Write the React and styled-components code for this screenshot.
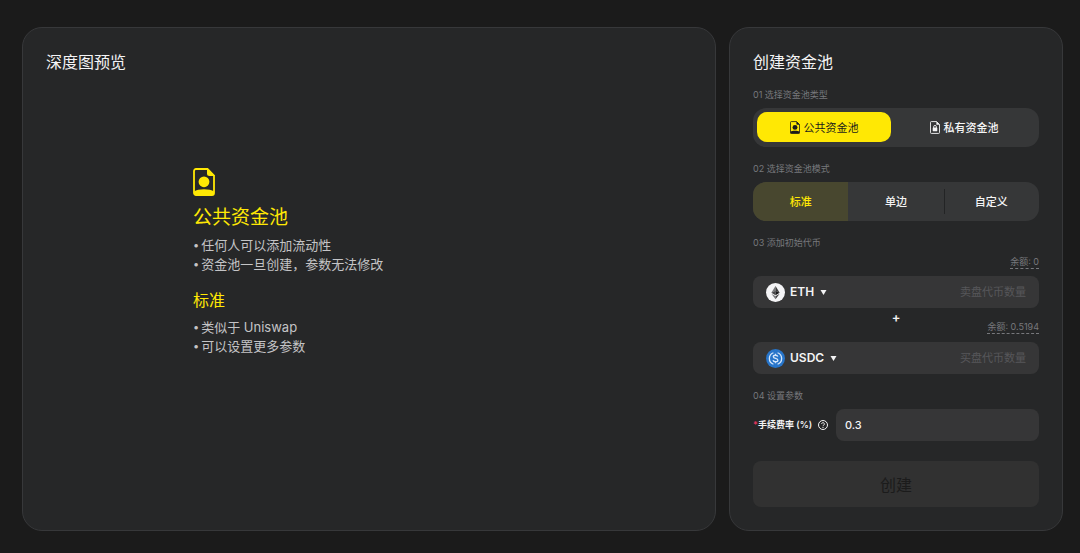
import React, { useState } from "react";
import styled, { createGlobalStyle, css } from "styled-components";

const GlobalStyle = createGlobalStyle`
  * { box-sizing: border-box; }
  body {
    margin: 0;
    background: #1b1b1b;
    color: #f4f4f5;
    font-family: Inter, "Noto Sans CJK SC", sans-serif;
    font-size: 11px;
  }
  h1, h2, h3, p, ul { margin: 0; padding: 0; font-weight: 400; }
  button, input, select { font: inherit; color: inherit; border: 0; margin: 0; }
`;

const Page = styled.main`
  display: grid;
  grid-template-columns: minmax(0, 1fr) 334px;
  gap: 13px;
  padding: 27px 17px 22px 22px;

  @media (max-width: 720px) {
    grid-template-columns: 1fr;
  }
`;

const Panel = styled.section`
  padding: 22px 23px 23px;
  border: 1px solid #37383a;
  border-radius: 20px;
  background: #262728;
`;

const PanelTitle = styled.h1`
  font-size: 16px;
  line-height: 24px;
`;

const Intro = styled.div`
  max-width: 352px;
  margin: 94px auto 0;
  color: #ffe804;

  > svg { display: block; }
`;

const IntroTitle = styled.h2`
  margin: 8px 0 4px;
  font-size: 19px;
  line-height: 28px;
`;

const IntroSubtitle = styled.h3`
  margin: 14px 0 6px;
  font-size: 16px;
  line-height: 24px;
`;

const Points = styled.ul`
  list-style: none;
  color: #c4c4c6;
  font-size: 13px;
  line-height: 19px;

  li { display: flex; gap: 2px; }
  li::before { content: "•"; font-size: 11px; }
`;

const StepLabel = styled.h2`
  margin: 15px 0 6px;
  color: #77787c;
  font-size: 9px;
  line-height: 14px;

  &:first-of-type { margin-top: 14px; }
`;

const Segments = styled.div`
  display: flex;
  height: 39px;
  border-radius: 13px;
  background: #363738;
  overflow: hidden;
`;

const TypeSegments = styled(Segments)`
  gap: 6px;
  padding: 4px 8px 5px 4px;
`;

const segmentButton = css`
  display: flex;
  flex: 1;
  align-items: center;
  justify-content: center;
  gap: 4px;
  padding: 0 0 2px;
  background: transparent;
  font-weight: 500;
  cursor: pointer;
`;

const TypeButton = styled.button`
  ${segmentButton}
  padding-bottom: 0;
  border-radius: 10px;
  ${(p) => p.$active && css`
    background: #ffe804;
    color: #1b1b1b;
    font-weight: 400;
  `}
`;

const ModeButton = styled.button`
  ${segmentButton}
  position: relative;
  ${(p) => p.$active && css`
    background: #48472f;
    color: #ffe804;
  `}

  & + &::before {
    content: "";
    position: absolute;
    left: 0;
    top: 7px;
    bottom: 7px;
    width: 1px;
    background: #232425;
  }
`;

const BalanceRow = styled.div`
  display: grid;
  grid-template-columns: 1fr auto 1fr;
  align-items: end;
  height: ${(p) => (p.$joined ? 34 : 20)}px;
  padding-bottom: 8px;
`;

const Plus = styled.span`
  grid-column: 2;
  align-self: start;
  font-size: 13px;
  font-weight: 600;
  line-height: 18px;
`;

const Balance = styled.span`
  grid-column: 3;
  justify-self: end;
  border-bottom: 1px dashed #77787c;
  color: #77787c;
  font-size: 9px;
  line-height: 12px;
`;

const TokenField = styled.div`
  display: flex;
  align-items: center;
  height: 32px;
  padding: 0 13px;
  border-radius: 8px;
  background: #363637;

  > svg { flex: none; }
`;

const TokenSelect = styled.select`
  appearance: none;
  field-sizing: content;
  margin: 0 6px 0 5px;
  padding: 0;
  background: transparent;
  font-size: 12px;
  font-weight: 600;
  line-height: 18px;
`;

const AmountInput = styled.input`
  flex: 1;
  min-width: 0;
  padding: 0;
  background: transparent;
  text-align: right;
  outline: none;

  &::placeholder { color: #57575a; opacity: 1; }
`;

const FeeRow = styled.div`
  display: flex;
  align-items: center;
`;

const FeeLabel = styled.label`
  display: flex;
  align-items: center;
  width: 83px;
  font-size: 9px;
  font-weight: 600;
  line-height: 14px;
  white-space: nowrap;

  svg { margin-left: 6px; }
`;

const Required = styled.span`
  width: 5px;
  color: #e0355f;
`;

const FeeInput = styled.input`
  flex: 1;
  min-width: 0;
  height: 32px;
  padding: 0 9px;
  border-radius: 8px;
  background: #363637;
  font-weight: 500;
  outline: none;
`;

const SubmitButton = styled.button`
  width: 100%;
  height: 46px;
  margin-top: 20px;
  border-radius: 8px;
  background: #313131;
  color: #1b1b1b;
  font-size: 16px;
`;

function PublicIcon({ width, height }) {
  return (
    <svg width={width} height={height} viewBox="0 0 22 28" fill="none" aria-hidden="true">
      <path d="M3 1H14.500L21 7.500V25a2 2 0 0 1-2 2H3a2 2 0 0 1-2-2V3a2 2 0 0 1 2-2Z" stroke="currentColor" strokeWidth="1.800" />
      <path d="M14 0V5.500Q14 8 16.500 8H22Z" fill="currentColor" />
      <circle cx="11" cy="13.800" r="5.400" fill="currentColor" />
      <path d="M1 23.500C5 20.500 17 20.500 21 23.500V27H1Z" fill="currentColor" />
    </svg>
  );
}

function PrivateIcon() {
  return (
    <svg width="10" height="13" viewBox="0 0 22 28" fill="none" aria-hidden="true">
      <path d="M3 1H14.500L21 7.500V25a2 2 0 0 1-2 2H3a2 2 0 0 1-2-2V3a2 2 0 0 1 2-2Z" stroke="currentColor" strokeWidth="2" />
      <path d="M14 0L22 8H14Z" fill="currentColor" />
      <path d="M8 15V12.500a3 3 0 0 1 6 0V15" stroke="currentColor" strokeWidth="2" />
      <rect x="6" y="14" width="10" height="8" rx="1" fill="currentColor" />
    </svg>
  );
}

function EthIcon() {
  return (
    <svg width="19" height="19" viewBox="0 0 32 32" aria-hidden="true">
      <circle cx="16" cy="16" r="16" fill="#f5f5f7" />
      <path d="M16 5L9 16.300 16 13Z" fill="#77787b" />
      <path d="M16 5L23 16.300 16 13Z" fill="#3c3c3d" />
      <path d="M9 16.300L16 13V20.700Z" fill="#454547" />
      <path d="M23 16.300L16 13V20.700Z" fill="#18181a" />
      <path d="M9 18L16 22.400V27.500Z" fill="#77787b" />
      <path d="M23 18L16 22.400V27.500Z" fill="#3c3c3d" />
    </svg>
  );
}

function UsdcIcon() {
  return (
    <svg width="19" height="19" viewBox="0 0 32 32" fill="none" stroke="#d5e6fa" strokeWidth="2.200" aria-hidden="true">
      <circle cx="16" cy="16" r="16" fill="#2775ca" stroke="none" />
      <path d="M12.500 6.300a10.300 10.300 0 0 0 0 19.400M19.500 6.300a10.300 10.300 0 0 1 0 19.400" />
      <path d="M19.800 13c-.3-1.600-1.700-2.500-3.800-2.500-2.300 0-3.700 1-3.700 2.600 0 3.900 7.700 1.700 7.700 5.700 0 1.700-1.500 2.700-4 2.700-2.400 0-3.900-1-4.100-2.800M16 8v2.500M16 21.500V24" />
    </svg>
  );
}

function Caret() {
  return (
    <svg width="7" height="6" viewBox="0 0 7 6" fill="currentColor" aria-hidden="true">
      <path d="M0.500 1H6.500L3.500 6Z" />
    </svg>
  );
}

function HelpIcon() {
  return (
    <svg width="10" height="10" viewBox="0 0 20 20" fill="none" stroke="currentColor" strokeWidth="2" aria-hidden="true">
      <circle cx="10" cy="10" r="9" />
      <path d="M7.300 8a2.700 2.700 0 1 1 4.200 2.200c-1 .7-1.500 1-1.500 2.200M10 14v2" />
    </svg>
  );
}

function TokenInput({ icon, initial, placeholder }) {
  const [token, setToken] = useState(initial);
  return (
    <TokenField>
      {icon}
      <TokenSelect aria-label={placeholder} value={token} onChange={(e) => setToken(e.target.value)}>
        <option>{initial}</option>
      </TokenSelect>
      <Caret />
      <AmountInput aria-label={placeholder} placeholder={placeholder} inputMode="decimal" />
    </TokenField>
  );
}

const modes = ["标准", "单边", "自定义"];

export default function App() {
  const [type, setType] = useState("public");
  const [mode, setMode] = useState("标准");

  return (
    <>
      <GlobalStyle />
      <Page>
        <Panel>
          <PanelTitle>深度图预览</PanelTitle>
          <Intro>
            <PublicIcon width={22} height={28} />
            <IntroTitle>公共资金池</IntroTitle>
            <Points>
              <li>任何人可以添加流动性</li>
              <li>资金池一旦创建，参数无法修改</li>
            </Points>
            <IntroSubtitle>标准</IntroSubtitle>
            <Points>
              <li>类似于 Uniswap</li>
              <li>可以设置更多参数</li>
            </Points>
          </Intro>
        </Panel>

        <Panel>
          <PanelTitle>创建资金池</PanelTitle>

          <StepLabel>01 选择资金池类型</StepLabel>
          <TypeSegments>
            <TypeButton type="button" $active={type === "public"} aria-pressed={type === "public"} onClick={() => setType("public")}>
              <PublicIcon width={10} height={13} />
              公共资金池
            </TypeButton>
            <TypeButton type="button" $active={type === "private"} aria-pressed={type === "private"} onClick={() => setType("private")}>
              <PrivateIcon />
              私有资金池
            </TypeButton>
          </TypeSegments>

          <StepLabel>02 选择资金池模式</StepLabel>
          <Segments>
            {modes.map((name) => (
              <ModeButton key={name} type="button" $active={mode === name} aria-pressed={mode === name} onClick={() => setMode(name)}>
                {name}
              </ModeButton>
            ))}
          </Segments>

          <StepLabel>03 添加初始代币</StepLabel>
          <BalanceRow>
            <Balance>余额: 0</Balance>
          </BalanceRow>
          <TokenInput icon={<EthIcon />} initial="ETH" placeholder="卖盘代币数量" />
          <BalanceRow $joined>
            <Plus>+</Plus>
            <Balance>余额: 0.5194</Balance>
          </BalanceRow>
          <TokenInput icon={<UsdcIcon />} initial="USDC" placeholder="买盘代币数量" />

          <StepLabel>04 设置参数</StepLabel>
          <FeeRow>
            <FeeLabel htmlFor="fee">
              <Required>*</Required>
              手续费率 (%)
              <HelpIcon />
            </FeeLabel>
            <FeeInput id="fee" defaultValue="0.3" inputMode="decimal" />
          </FeeRow>

          <SubmitButton type="button" disabled>创建</SubmitButton>
        </Panel>
      </Page>
    </>
  );
}
